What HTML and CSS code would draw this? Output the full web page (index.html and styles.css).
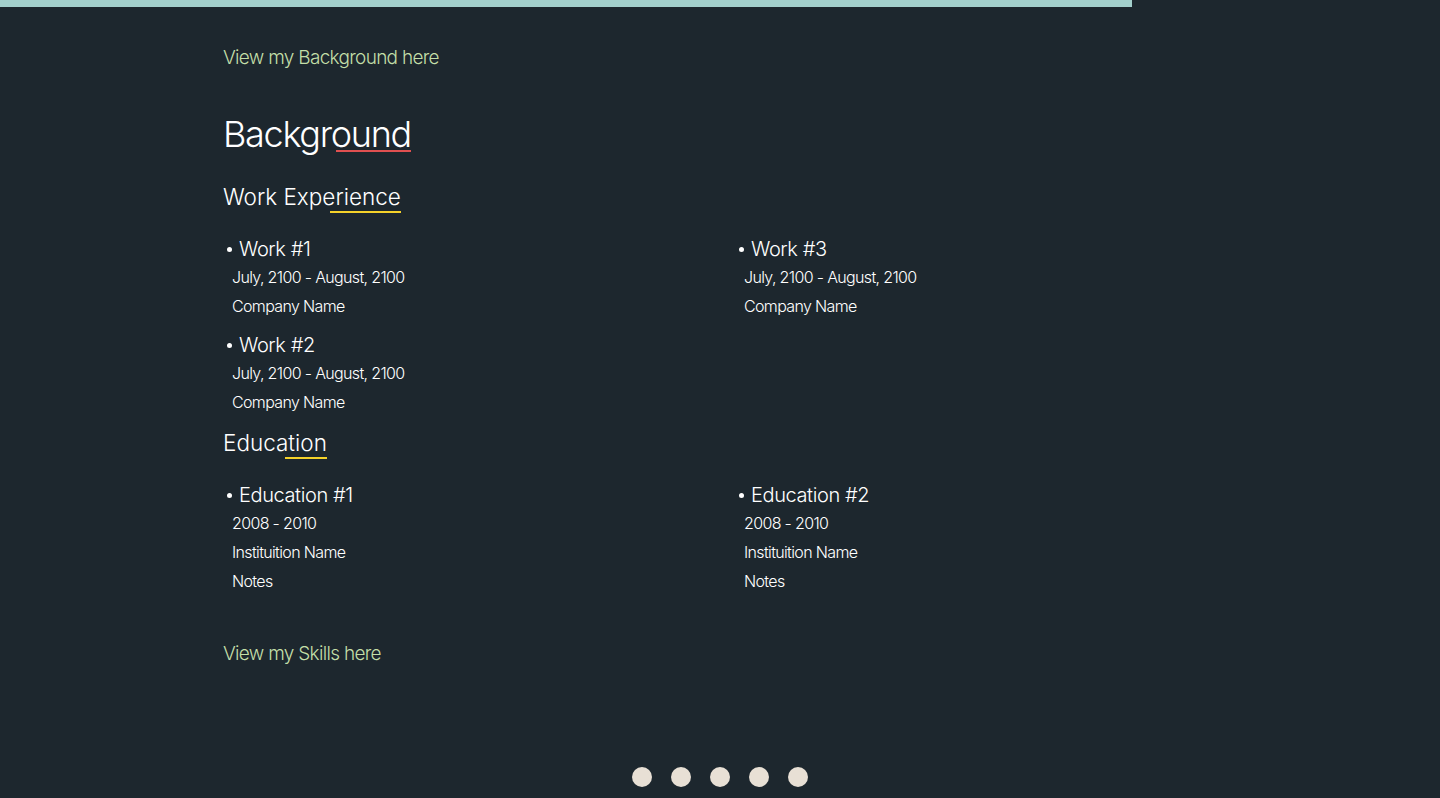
FILE: index.html
```html
<!DOCTYPE html>
<html lang="en">
<head>
<meta charset="utf-8">
<title>Background</title>
<link rel="stylesheet" href="styles.css">
</head>
<body>
<div class="progress"></div>
<main class="content">
  <a class="link link-top" href="#background">View my Background here</a>
  <section class="background" id="background">
    <h1 class="title"><span class="mark mark-red">Background</span></h1>
    <h2 class="subtitle first"><span class="mark mark-yellow">Work Experience</span></h2>
    <div class="grid">
      <div class="col">
        <div class="item">
          <div class="item-title">Work #1</div>
          <div class="item-line">July, 2100 - August, 2100</div>
          <div class="item-line">Company Name</div>
        </div>
        <div class="item">
          <div class="item-title">Work #2</div>
          <div class="item-line">July, 2100 - August, 2100</div>
          <div class="item-line">Company Name</div>
        </div>
      </div>
      <div class="col">
        <div class="item">
          <div class="item-title">Work #3</div>
          <div class="item-line">July, 2100 - August, 2100</div>
          <div class="item-line">Company Name</div>
        </div>
      </div>
    </div>
    <h2 class="subtitle"><span class="mark mark-yellow">Education</span></h2>
    <div class="grid">
      <div class="col">
        <div class="item">
          <div class="item-title">Education #1</div>
          <div class="item-line">2008 - 2010</div>
          <div class="item-line">Instituition Name</div>
          <div class="item-line">Notes</div>
        </div>
      </div>
      <div class="col">
        <div class="item">
          <div class="item-title">Education #2</div>
          <div class="item-line">2008 - 2010</div>
          <div class="item-line">Instituition Name</div>
          <div class="item-line">Notes</div>
        </div>
      </div>
    </div>
  </section>
  <a class="link link-bottom" href="#skills">View my Skills here</a>
</main>
<nav class="dots">
  <span class="dot"></span>
  <span class="dot"></span>
  <span class="dot"></span>
  <span class="dot"></span>
  <span class="dot"></span>
</nav>
</body>
</html>
```

FILE: styles.css
```css
* { box-sizing: border-box; }

html, body {
  margin: 0;
  padding: 0;
  height: 100%;
}

body {
  background: #1d272e;
  color: #ffffff;
  font-family: "Inter", "Noto Sans", sans-serif;
  font-weight: 300;
  overflow: hidden;
}

.progress {
  width: 1132px;
  height: 7px;
  background: #a3d0cc;
}

.content {
  padding-left: 223px;
  width: 1247px;
}

.link {
  display: block;
  width: max-content;
  color: #c3dfa8;
  text-decoration: none;
  font-size: 19px;
  line-height: 24px;
  letter-spacing: -0.7px;
}

.link-top { margin-top: 39px; }
.link-bottom { margin-top: 46px; }

.title {
  margin: 42px 0 0;
  font-size: 36px;
  line-height: 44px;
  font-weight: 300;
  letter-spacing: -1.3px;
}

.subtitle {
  margin: 12px 0 0;
  font-size: 22.5px;
  line-height: 28px;
  font-weight: 300;
}

.subtitle.first { margin-top: 27px; }

.mark {
  position: relative;
  display: inline-block;
}

.mark::after {
  content: "";
  position: absolute;
  right: 0;
  width: 40%;
  height: 2px;
}

.mark-red::after {
  bottom: 4px;
  background: #e05050;
}

.mark-yellow::after {
  bottom: -2px;
  background: #f5d22a;
}

.grid {
  display: grid;
  grid-template-columns: 512px 512px;
  margin-top: 26px;
}

.col {
  display: flex;
  flex-direction: column;
  gap: 12px;
}

.item-title {
  display: flex;
  align-items: center;
  font-size: 20px;
  line-height: 24px;
  letter-spacing: -0.4px;
  margin-bottom: 2px;
}

.item-title::before {
  content: "";
  width: 5px;
  height: 5px;
  border-radius: 50%;
  background: #ffffff;
  margin: 1px 7px 0 4px;
}

.item-line {
  padding-left: 9px;
  font-size: 16px;
  line-height: 29px;
  letter-spacing: -0.65px;
}

.dots {
  display: flex;
  justify-content: center;
  gap: 19px;
  margin-top: 101px;
}

.dot {
  width: 20px;
  height: 20px;
  border-radius: 50%;
  background: #e8e0d5;
}
```
